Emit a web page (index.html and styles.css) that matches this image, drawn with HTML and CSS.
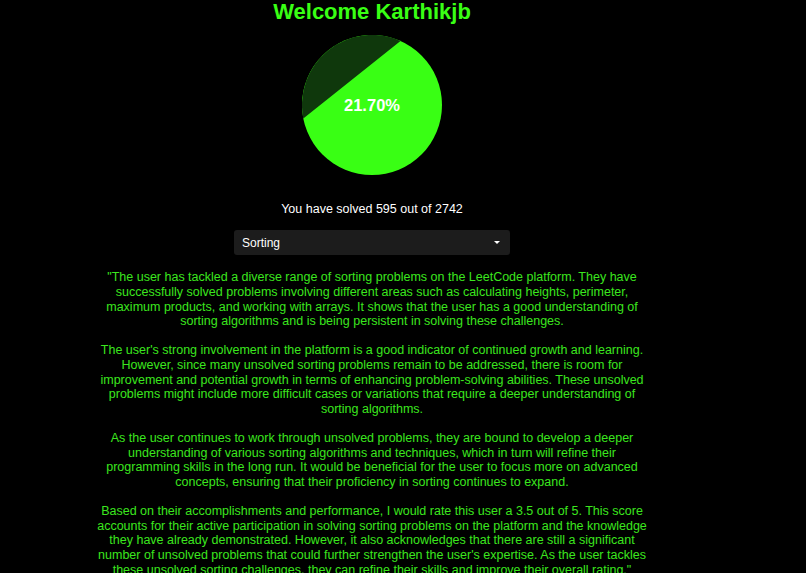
FILE: index.html
```html
<!DOCTYPE html>
<html lang="en">
<head>
    <meta charset="UTF-8">
    <meta name="viewport" content="width=device-width, initial-scale=1.0">
    <title>LeetCode Insights</title>
    <link rel="stylesheet" href="styles.css">
</head>
<body>
    <div class="app">
        <h1 class="welcome">Welcome Karthikjb</h1>
        <div class="chart">
            <svg width="140" height="140" viewBox="0 0 140 140">
                <circle cx="70" cy="70" r="70" fill="#39ff14"></circle>
                <path d="M1.3 83.4 A70 70 0 0 1 98.5 6 Z" fill="#0f380c"></path>
            </svg>
            <span class="percent">21.70%</span>
        </div>
        <p class="solved">You have solved 595 out of 2742</p>
        <div class="select">
            <span>Sorting</span>
            <span class="caret"></span>
        </div>
        <div class="summary">
            <p>"The user has tackled a diverse range of sorting problems on the LeetCode platform. They have successfully solved problems involving different areas such as calculating heights, perimeter, maximum products, and working with arrays. It shows that the user has a good understanding of sorting algorithms and is being persistent in solving these challenges.</p>
            <p>The user's strong involvement in the platform is a good indicator of continued growth and learning. However, since many unsolved sorting problems remain to be addressed, there is room for improvement and potential growth in terms of enhancing problem-solving abilities. These unsolved problems might include more difficult cases or variations that require a deeper understanding of sorting algorithms.</p>
            <p>As the user continues to work through unsolved problems, they are bound to develop a deeper understanding of various sorting algorithms and techniques, which in turn will refine their programming skills in the long run. It would be beneficial for the user to focus more on advanced concepts, ensuring that their proficiency in sorting continues to expand.</p>
            <p>Based on their accomplishments and performance, I would rate this user a 3.5 out of 5. This score accounts for their active participation in solving sorting problems on the platform and the knowledge they have already demonstrated. However, it also acknowledges that there are still a significant number of unsolved problems that could further strengthen the user's expertise. As the user tackles these unsolved sorting challenges, they can refine their skills and improve their overall rating."</p>
        </div>
    </div>
</body>
</html>
```

FILE: styles.css
```css
body {
    font-family: "Liberation Sans", Arial, sans-serif;
    margin: 0;
    padding: 0;
    background: #000;
}
.app {
    width: 744px;
    display: flex;
    flex-direction: column;
    align-items: center;
}
.welcome {
    margin: 0;
    font-size: 22px;
    line-height: 23px;
    color: #39ff14;
}
.chart {
    position: relative;
    width: 140px;
    height: 140px;
    margin-top: 12px;
}
.chart svg {
    display: block;
}
.percent {
    position: absolute;
    left: 0;
    right: 0;
    top: 61px;
    text-align: center;
    color: #fff;
    font-weight: bold;
    font-size: 16.5px;
}
.solved {
    color: #fff;
    font-size: 12.5px;
    line-height: 15px;
    margin: 27px 0 13px;
}
.select {
    width: 276px;
    height: 25px;
    box-sizing: border-box;
    background: #1c1c1c;
    border-radius: 3px;
    display: flex;
    align-items: center;
    justify-content: space-between;
    padding: 0 10px 0 8px;
    color: #fff;
    font-size: 12px;
}
.caret {
    width: 0;
    height: 0;
    border-left: 3px solid transparent;
    border-right: 3px solid transparent;
    border-top: 3px solid #fff;
}
.summary {
    width: 558px;
    margin-top: 15px;
    text-align: center;
    color: #3be61e;
    font-size: 12.5px;
    line-height: 14.75px;
}
.summary p {
    margin: 0 0 14px;
}
```
